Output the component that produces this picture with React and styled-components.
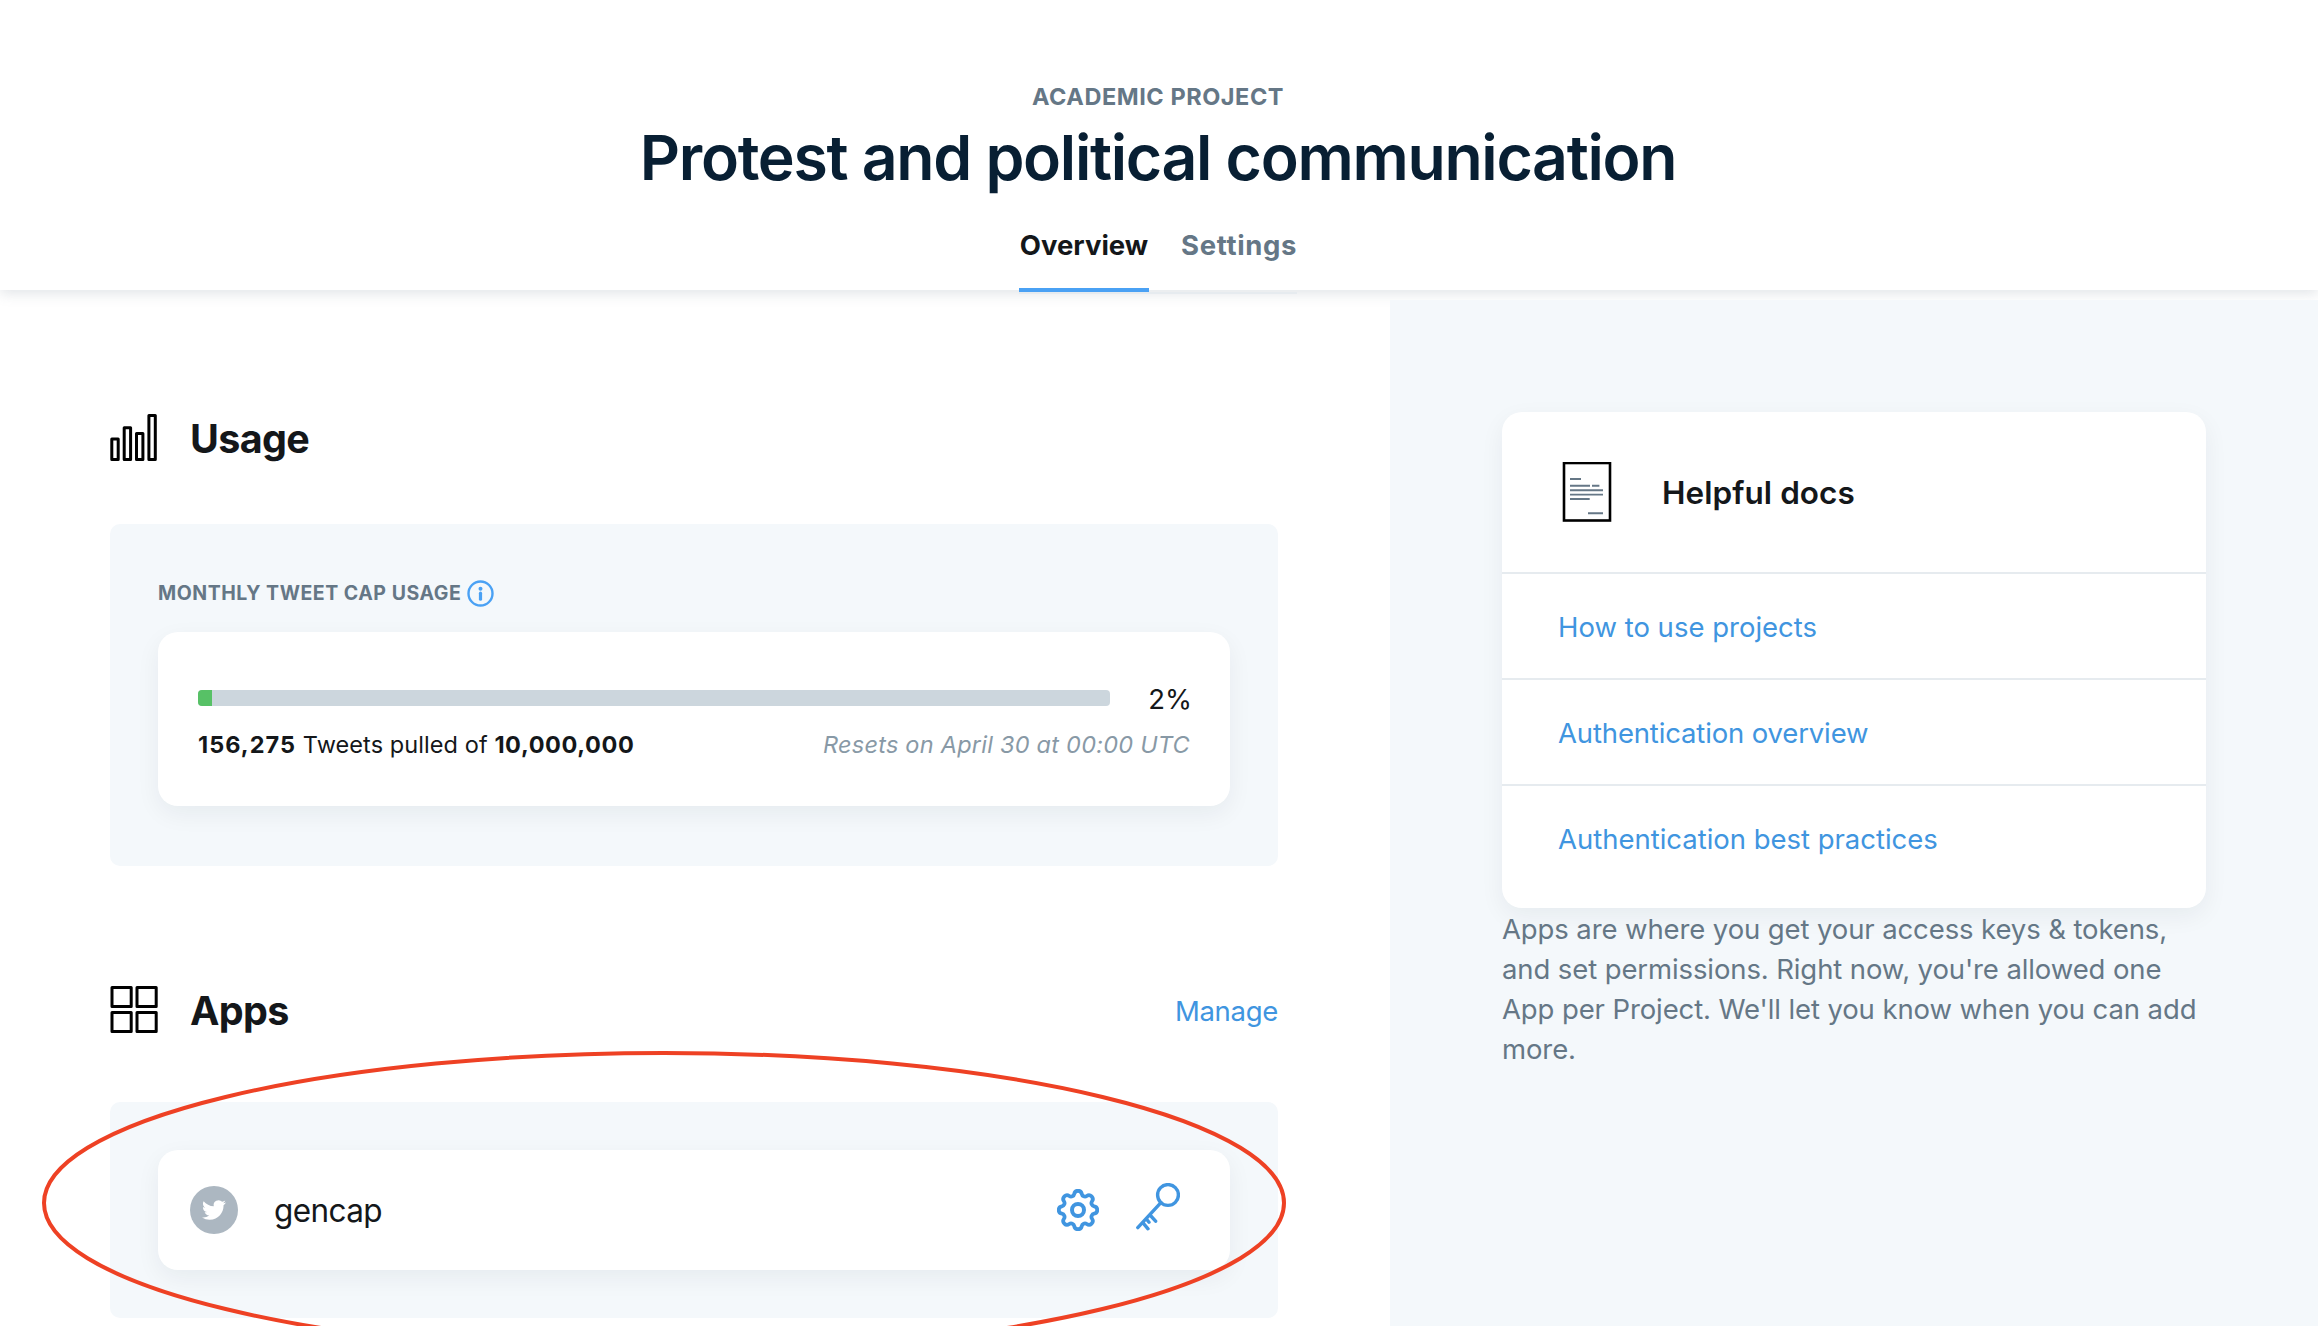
import React from 'react';
import styled, { createGlobalStyle } from 'styled-components';

const color = {
  ink: '#14171a',
  title: '#081f33',
  slate: '#657786',
  muted: '#8899a6',
  link: '#4095e0',
  bright: '#4aa1f4',
  panel: '#f4f8fb',
  line: '#e6ebef',
  track: '#ccd6dd',
  green: '#57c166',
  avatar: '#acb7c1',
  marker: '#ee4124',
};

const cardShadow = '0 8px 24px rgba(20, 35, 45, 0.06)';

const GlobalStyle = createGlobalStyle`
  *, *::before, *::after { box-sizing: border-box; }
  body {
    margin: 0;
    background: #fff;
    color: ${color.ink};
    font-family: Inter, "Liberation Sans", sans-serif;
    overflow: hidden;
  }
  h1, h2, h3, p, ul { margin: 0; padding: 0; }
  svg { display: block; flex: none; }
`;

const Page = styled.div`
  position: relative;
  display: flex;
  flex-direction: column;
  width: 2318px;
  height: 1326px;
  overflow: hidden;
`;

const Header = styled.header`
  position: relative;
  z-index: 1;
  display: flex;
  flex-direction: column;
  align-items: center;
  flex: none;
  height: 290px;
  padding: 82px 2px 0 0;
  background: #fff;
  box-shadow: 0 4px 12px rgba(101, 119, 134, 0.18);
`;

const Eyebrow = styled.div`
  color: ${color.slate};
  font-size: 23.5px;
  font-weight: 700;
  line-height: 30px;
  letter-spacing: 0.55px;
`;

const Title = styled.h1`
  margin-top: 7px;
  color: ${color.title};
  font-size: 62.5px;
  font-weight: 600;
  line-height: 76px;
  letter-spacing: -1.3px;
`;

const Tabs = styled.nav`
  display: flex;
  flex: none;
  gap: 32px;
  margin-top: 33px;
  border-bottom: 2px solid ${color.line};
`;

const Tab = styled.a`
  width: ${(p) => p.$width}px;
  padding-bottom: 26px;
  border-bottom: 4px solid ${(p) => (p.$active ? color.bright : 'transparent')};
  color: ${(p) => (p.$active ? color.ink : color.slate)};
  font-size: 27.5px;
  font-weight: 700;
  line-height: 34px;
  letter-spacing: ${(p) => p.$spacing}px;
  text-align: center;
`;

const Body = styled.div`
  display: flex;
  flex: 1;
  min-height: 0;
`;

const Main = styled.main`
  width: 1390px;
  padding: 124px 112px 0 110px;
`;

const SectionHead = styled.div`
  display: flex;
  align-items: flex-start;
  gap: 32px;
  height: 50px;
  margin-bottom: ${(p) => p.$gap}px;
`;

const SectionTitle = styled.h2`
  flex: 1;
  font-size: 39.5px;
  font-weight: 700;
  line-height: 50px;
  letter-spacing: -0.65px;
`;

const ManageLink = styled.a`
  margin-top: 8px;
  color: ${color.link};
  font-size: 27.5px;
  line-height: 34px;
  letter-spacing: -0.3px;
`;

const Panel = styled.section`
  padding: ${(p) => p.$pad};
  border-radius: 10px;
  background: ${color.panel};
`;

const UsagePanel = styled(Panel)`
  margin-bottom: 120px;
`;

const PanelLabel = styled.div`
  display: flex;
  align-items: center;
  gap: 6px;
  height: 26px;
  margin-bottom: 26px;
  color: ${color.slate};
  font-size: 19.5px;
  font-weight: 700;
  line-height: 26px;
  letter-spacing: 0.53px;
`;

const Card = styled.div`
  border-radius: 20px;
  background: #fff;
  box-shadow: ${cardShadow};
`;

const UsageCard = styled(Card)`
  height: 174px;
  padding: 50px 40px 0;
`;

const MeterRow = styled.div`
  display: flex;
  align-items: center;
  justify-content: space-between;
  height: 34px;
`;

const Track = styled.div`
  width: 912px;
  height: 16px;
  margin-bottom: 2px;
  border-radius: 4px;
  background: ${color.track};
  overflow: hidden;
`;

const Fill = styled.div`
  height: 100%;
  background: ${color.green};
`;

const Percent = styled.span`
  margin-right: -2px;
  font-size: 27.5px;
  line-height: 34px;
`;

const StatsRow = styled.div`
  display: flex;
  justify-content: space-between;
  margin-top: 13px;
  font-size: 23.5px;
  line-height: 31px;
  letter-spacing: 0.08px;
`;

const Count = styled.strong`
  font-weight: 700;
  letter-spacing: ${(p) => p.$spacing}px;
`;

const ResetNote = styled.em`
  color: ${color.muted};
  letter-spacing: 0.24px;
`;

const AppCard = styled(Card)`
  display: flex;
  align-items: center;
  height: 120px;
  padding: 0 50px 0 32px;
`;

const Avatar = styled.div`
  display: flex;
  align-items: center;
  justify-content: center;
  width: 48px;
  height: 48px;
  margin-right: 36px;
  border-radius: 50%;
  background: ${color.avatar};
`;

const AppName = styled.span`
  flex: 1;
  padding-top: 1px;
  font-size: 31.5px;
  line-height: 40px;
  letter-spacing: -0.6px;
`;

const Actions = styled.div`
  display: flex;
  align-items: center;
  gap: 37px;
  color: ${color.link};

  svg:last-child { margin-bottom: 6px; }
`;

const Aside = styled.aside`
  position: relative;
  z-index: 2;
  flex: 1;
  margin-top: 10px;
  padding: 112px 112px 0;
  background: ${color.panel};
`;

const DocsHead = styled.div`
  display: flex;
  align-items: center;
  gap: 50px;
  height: 160px;
  padding-left: 60px;
`;

const DocsTitle = styled.h3`
  padding-top: 2px;
  font-size: 31.5px;
  font-weight: 600;
  line-height: 40px;
  letter-spacing: 0.05px;
`;

const DocsRow = styled.a`
  display: block;
  padding: 36px 56px 34px;
  border-top: 2px solid ${color.line};
  color: ${color.link};
  font-size: 27.5px;
  line-height: 34px;
  letter-spacing: ${(p) => p.$spacing}px;

  &:last-child { padding-bottom: 52px; }
`;

const Note = styled.p`
  margin-top: 1px;
  color: ${color.slate};
  font-size: 27.5px;
  line-height: 40px;
  letter-spacing: -0.11px;
`;

const Marker = styled.svg`
  position: absolute;
  left: 40px;
  top: 1049px;
  z-index: 3;
  pointer-events: none;
`;

const BarsIcon = () => (
  <svg width="48" height="48" viewBox="0 0 48 48" fill="none" stroke="#000" strokeWidth="3" strokeLinejoin="round">
    <rect x="1.8" y="25" width="6.4" height="20.5" />
    <rect x="14.2" y="13.8" width="6.4" height="31.7" />
    <rect x="26.5" y="19.4" width="6.4" height="26.1" />
    <rect x="38.9" y="1.6" width="6.4" height="43.9" />
  </svg>
);

const GridIcon = () => (
  <svg width="48" height="48" viewBox="0 0 48 48" fill="none" stroke="#000" strokeWidth="3" strokeLinejoin="round">
    <rect x="2" y="1.6" width="19.2" height="19" />
    <rect x="27" y="1.6" width="19.2" height="19" />
    <rect x="2" y="26.5" width="19.2" height="19" />
    <rect x="27" y="26.5" width="19.2" height="19" />
  </svg>
);

const InfoIcon = () => (
  <svg width="27" height="27" viewBox="0 0 27 27" fill="none" stroke={color.bright}>
    <circle cx="13.5" cy="13.5" r="12" strokeWidth="2.4" />
    <circle cx="13.5" cy="8.7" r="2" fill={color.bright} stroke="none" />
    <path d="M13.5 13.2v6" strokeWidth="3.2" strokeLinecap="round" />
  </svg>
);

const BirdIcon = () => (
  <svg width="24" height="24" viewBox="0 0 24 24" fill="#fff">
    <path d="M23.953 4.57a10 10 0 01-2.825.775 4.958 4.958 0 002.163-2.723c-.951.555-2.005.959-3.127 1.184a4.92 4.92 0 00-8.384 4.482C7.69 8.095 4.067 6.13 1.64 3.162a4.822 4.822 0 00-.666 2.475c0 1.71.87 3.213 2.188 4.096a4.904 4.904 0 01-2.228-.616v.06a4.923 4.923 0 003.946 4.827 4.996 4.996 0 01-2.212.085 4.936 4.936 0 004.604 3.417 9.867 9.867 0 01-6.102 2.105c-.39 0-.779-.023-1.17-.067a13.995 13.995 0 007.557 2.209c9.053 0 13.998-7.496 13.998-13.985 0-.21 0-.42-.015-.63A9.935 9.935 0 0024 4.59z" />
  </svg>
);

// Eight rounded teeth joined by concave arcs that are tangent to them.
const gearPath = (() => {
  const tooth = { d: 15.5, r: 3.8 };
  const notch = { d: 18, r: 3.2 };
  const at = (d, deg) => {
    const a = (deg * Math.PI) / 180;
    return [d * Math.sin(a), -d * Math.cos(a)];
  };
  const touch = (toothDeg, notchDeg) => {
    const [tx, ty] = at(tooth.d, toothDeg);
    const [nx, ny] = at(notch.d, notchDeg);
    const k = tooth.r / (tooth.r + notch.r);
    return `${(tx + (nx - tx) * k).toFixed(2)} ${(ty + (ny - ty) * k).toFixed(2)}`;
  };
  let d = `M${touch(0, -22.5)}`;
  for (let i = 0; i < 8; i += 1) {
    const a = i * 45;
    d += `A${tooth.r} ${tooth.r} 0 0 1 ${touch(a, a + 22.5)}`;
    d += `A${notch.r} ${notch.r} 0 0 0 ${touch(a + 45, a + 22.5)}`;
  }
  return `${d}Z`;
})();

const GearIcon = () => (
  <svg width="42" height="42" viewBox="-21 -21 42 42" fill="none" stroke="currentColor">
    <path d={gearPath} strokeWidth="3.8" />
    <circle r="6" strokeWidth="4" />
  </svg>
);

const KeyIcon = () => (
  <svg width="44" height="48" viewBox="0 0 44 48" fill="none" stroke="currentColor" strokeWidth="3.4" strokeLinecap="round">
    <circle cx="32" cy="12" r="10.4" />
    <path d="M24.9 19.6L1.8 44.6M6.8 39.6l5.2 6.2M10.4 36l2.6 3.2M14 32l5.6 6.2" />
  </svg>
);

const DocIcon = () => (
  <svg width="50" height="60" viewBox="0 0 50 60" fill="none">
    <rect x="2" y="1" width="46" height="57.5" stroke="#000" strokeWidth="2.6" />
    <path
      d="M8 17h11M8 23.8h20M30 23.8h7.4M8 28.2h33M8 32.6h33M8 37h19.7M26 51.3h15"
      stroke={color.slate}
      strokeWidth="1.9"
    />
  </svg>
);

const tabs = [
  { label: 'Overview', width: 130, spacing: 0, active: true },
  { label: 'Settings', width: 116, spacing: 0.65 },
];

const docs = [
  { label: 'How to use projects', spacing: 0 },
  { label: 'Authentication overview', spacing: -0.15 },
  { label: 'Authentication best practices', spacing: -0.02 },
];

const usage = { pulled: 156275, cap: 10000000 };

export default function App() {
  const ratio = (usage.pulled / usage.cap) * 100;
  return (
    <>
      <GlobalStyle />
      <Page>
        <Header>
          <Eyebrow>ACADEMIC PROJECT</Eyebrow>
          <Title>Protest and political communication</Title>
          <Tabs>
            {tabs.map((t) => (
              <Tab key={t.label} $width={t.width} $spacing={t.spacing} $active={t.active}>
                {t.label}
              </Tab>
            ))}
          </Tabs>
        </Header>
        <Body>
          <Main>
            <SectionHead $gap={60}>
              <BarsIcon />
              <SectionTitle>Usage</SectionTitle>
            </SectionHead>
            <UsagePanel $pad="56px 48px 60px">
              <PanelLabel>
                MONTHLY TWEET CAP USAGE
                <InfoIcon />
              </PanelLabel>
              <UsageCard>
                <MeterRow>
                  <Track>
                    <Fill style={{ width: `${ratio}%` }} />
                  </Track>
                  <Percent>{Math.round(ratio)}%</Percent>
                </MeterRow>
                <StatsRow>
                  <span>
                    <Count $spacing={1.05}>{usage.pulled.toLocaleString('en-US')}</Count> Tweets pulled of{' '}
                    <Count $spacing={0.6}>{usage.cap.toLocaleString('en-US')}</Count>
                  </span>
                  <ResetNote>Resets on April 30 at 00:00 UTC</ResetNote>
                </StatsRow>
              </UsageCard>
            </UsagePanel>
            <SectionHead $gap={66}>
              <GridIcon />
              <SectionTitle>Apps</SectionTitle>
              <ManageLink>Manage</ManageLink>
            </SectionHead>
            <Panel $pad="48px">
              <AppCard>
                <Avatar>
                  <BirdIcon />
                </Avatar>
                <AppName>gencap</AppName>
                <Actions>
                  <GearIcon />
                  <KeyIcon />
                </Actions>
              </AppCard>
            </Panel>
          </Main>
          <Aside>
            <Card>
              <DocsHead>
                <DocIcon />
                <DocsTitle>Helpful docs</DocsTitle>
              </DocsHead>
              {docs.map((d) => (
                <DocsRow key={d.label} $spacing={d.spacing}>
                  {d.label}
                </DocsRow>
              ))}
            </Card>
            <Note>
              Apps are where you get your access keys &amp; tokens, and set permissions. Right now, you're allowed
              one App per Project. We'll let you know when you can add more.
            </Note>
          </Aside>
        </Body>
        <Marker width="1248" height="308" viewBox="0 0 1248 308" fill="none">
          <ellipse cx="624" cy="154" rx="620" ry="150" stroke={color.marker} strokeWidth="4" />
        </Marker>
      </Page>
    </>
  );
}
